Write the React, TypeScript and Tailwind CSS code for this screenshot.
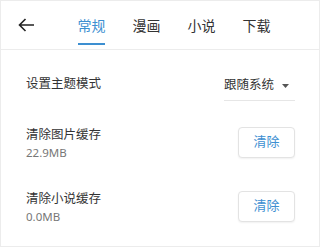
import React from "react";

const tabs = ["常规", "漫画", "小说", "下载"];

const CacheRow: React.FunctionComponent<{ title: string; size: string }> = ({
  title,
  size,
}) => (
  <div className="flex items-center justify-between h-[64px] pl-[25px] pr-[24px]">
    <div className="flex flex-col pt-[4px]">
      <span className="text-[12.5px] leading-[18px] text-[#333]">{title}</span>
      <span className="text-[11.5px] leading-[18px] text-[#777]">{size}</span>
    </div>
    <button className="w-[57px] h-[31px] rounded-[4px] border border-[#e3e3e3] bg-white text-[13px] text-[#3d8fd1] shadow-[0_1px_2px_rgba(0,0,0,0.06)]">
      清除
    </button>
  </div>
);

const App: React.FunctionComponent = () => {
  return (
    <div
      className="w-[320px] h-[247px] bg-white border border-[#ececec] overflow-hidden"
      style={{ fontFamily: '"Noto Sans", "Noto Sans CJK SC", sans-serif' }}
    >
      {/* header */}
      <div className="flex items-end h-[49px] border-b border-[#ececec]">
        <div className="w-[63px] h-full flex items-center justify-center pr-[13px]">
          <svg width="17" height="14" viewBox="0 0 17 14" fill="none">
            <path
              d="M16 7H1.5M7.5 1L1.5 7L7.5 13"
              stroke="#222"
              strokeWidth="1.6"
            />
          </svg>
        </div>
        <div className="flex h-full">
          {tabs.map((t, i) => (
            <div
              key={t}
              className="relative w-[55px] h-full flex items-center justify-center"
            >
              <span
                className={
                  "text-[14px] " + (i === 0 ? "text-[#3d8fd1]" : "text-[#333]")
                }
              >
                {t}
              </span>
              {i === 0 && (
                <div className="absolute bottom-[4px] left-[14px] w-[27px] h-[2px] bg-[#3d8fd1]" />
              )}
            </div>
          ))}
        </div>
      </div>

      {/* theme */}
      <div className="flex items-center justify-between h-[60px] pl-[25px] pr-[24px] pt-[8px]">
        <span className="text-[12.5px] text-[#333]">设置主题模式</span>
        <div className="flex items-center gap-[8px] w-[71px] h-[30px] border-b border-[#e6e6e6] mt-[4px]">
          <span className="text-[12.5px] text-[#333]">跟随系统</span>
          <svg width="7" height="4" viewBox="0 0 7 4">
            <path d="M0 0H7L3.5 4Z" fill="#555" />
          </svg>
        </div>
      </div>

      <CacheRow title="清除图片缓存" size="22.9MB" />
      <CacheRow title="清除小说缓存" size="0.0MB" />
    </div>
  );
};

export default App;
